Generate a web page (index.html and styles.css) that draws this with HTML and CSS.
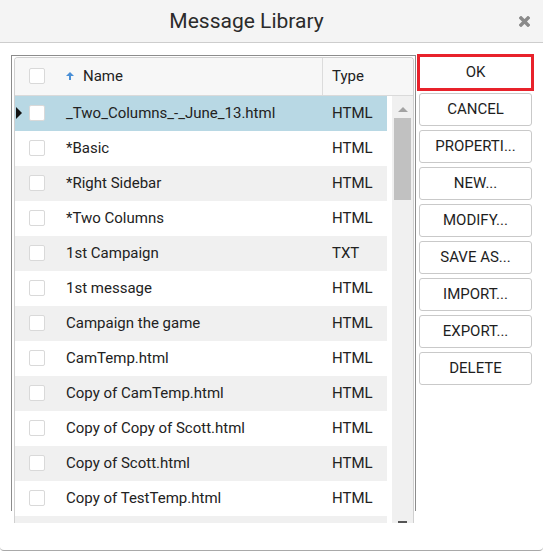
FILE: index.html
```html
<!DOCTYPE html>
<html lang="en">

<head>
    <meta charset="UTF-8">
    <meta name="viewport" content="width=device-width, initial-scale=1.0">
    <title>Message Library</title>
    <link rel="stylesheet" href="styles.css">
</head>

<body>

    <div class="dialog">
        <div class="titlebar">
            <h1 class="title">Message Library</h1>
            <button class="close" title="Close">
                <svg width="11" height="11" viewBox="0 0 11 11">
                    <path d="M2 2 L9 9 M9 2 L2 9" stroke="#8a8a8a" stroke-width="3.4" stroke-linecap="square" fill="none"/>
                </svg>
            </button>
        </div>

        <div class="content">
            <div class="grid-frame">
                <div class="grid">
                    <div class="grid-head">
                        <div class="cell cell-check"><span class="checkbox"></span></div>
                        <div class="cell cell-name">
                            <svg class="sort-arrow" width="8" height="8" viewBox="0 0 8 8">
                                <path d="M4 0 L8 4 H5 V8 H3 V4 H0 Z" fill="#4a8fd6"/>
                            </svg>
                            Name
                        </div>
                        <div class="cell cell-type">Type</div>
                    </div>

                    <div class="grid-body">
                        <div class="rows">
                            <div class="row selected">
                                <div class="cell cell-check"><span class="pointer"></span><span class="checkbox"></span></div>
                                <div class="cell cell-name">_Two_Columns_-_June_13.html</div>
                                <div class="cell cell-type">HTML</div>
                            </div>
                            <div class="row">
                                <div class="cell cell-check"><span class="checkbox"></span></div>
                                <div class="cell cell-name">*Basic</div>
                                <div class="cell cell-type">HTML</div>
                            </div>
                            <div class="row alt">
                                <div class="cell cell-check"><span class="checkbox"></span></div>
                                <div class="cell cell-name">*Right Sidebar</div>
                                <div class="cell cell-type">HTML</div>
                            </div>
                            <div class="row">
                                <div class="cell cell-check"><span class="checkbox"></span></div>
                                <div class="cell cell-name">*Two Columns</div>
                                <div class="cell cell-type">HTML</div>
                            </div>
                            <div class="row alt">
                                <div class="cell cell-check"><span class="checkbox"></span></div>
                                <div class="cell cell-name">1st Campaign</div>
                                <div class="cell cell-type">TXT</div>
                            </div>
                            <div class="row">
                                <div class="cell cell-check"><span class="checkbox"></span></div>
                                <div class="cell cell-name">1st message</div>
                                <div class="cell cell-type">HTML</div>
                            </div>
                            <div class="row alt">
                                <div class="cell cell-check"><span class="checkbox"></span></div>
                                <div class="cell cell-name">Campaign the game</div>
                                <div class="cell cell-type">HTML</div>
                            </div>
                            <div class="row">
                                <div class="cell cell-check"><span class="checkbox"></span></div>
                                <div class="cell cell-name">CamTemp.html</div>
                                <div class="cell cell-type">HTML</div>
                            </div>
                            <div class="row alt">
                                <div class="cell cell-check"><span class="checkbox"></span></div>
                                <div class="cell cell-name">Copy of CamTemp.html</div>
                                <div class="cell cell-type">HTML</div>
                            </div>
                            <div class="row">
                                <div class="cell cell-check"><span class="checkbox"></span></div>
                                <div class="cell cell-name">Copy of Copy of Scott.html</div>
                                <div class="cell cell-type">HTML</div>
                            </div>
                            <div class="row alt">
                                <div class="cell cell-check"><span class="checkbox"></span></div>
                                <div class="cell cell-name">Copy of Scott.html</div>
                                <div class="cell cell-type">HTML</div>
                            </div>
                            <div class="row">
                                <div class="cell cell-check"><span class="checkbox"></span></div>
                                <div class="cell cell-name">Copy of TestTemp.html</div>
                                <div class="cell cell-type">HTML</div>
                            </div>
                            <div class="row alt"></div>
                        </div>

                        <div class="scrollbar">
                            <span class="scroll-up"></span>
                            <span class="scroll-thumb"></span>
                            <span class="scroll-down"></span>
                        </div>
                    </div>
                </div>
            </div>

            <div class="actions">
                <button class="btn btn-primary">OK</button>
                <button class="btn">Cancel</button>
                <button class="btn">Properti...</button>
                <button class="btn">New...</button>
                <button class="btn">Modify...</button>
                <button class="btn">Save As...</button>
                <button class="btn">Import...</button>
                <button class="btn">Export...</button>
                <button class="btn">Delete</button>
            </div>
        </div>
    </div>

</body>

</html>
```

FILE: styles.css
```css
body {
    font-family: Roboto, 'Liberation Sans', Arial, sans-serif;
    background-color: #fff;
    margin: 0;
    padding: 0;
    color: #222;
}

.dialog {
    height: 551px;
    box-sizing: border-box;
    border-bottom: 1px solid #a9a9a9;
    border-radius: 0 0 4px 4px;
    overflow: hidden;
}

/* Başlık çubuğu */
.titlebar {
    display: flex;
    align-items: center;
    height: 42px;
    background-color: #f4f4f4;
    border-bottom: 1px solid #cdcdcd;
}

.title {
    flex: 1;
    margin: 0;
    text-align: center;
    font-size: 21px;
    font-weight: 400;
    line-height: 40px;
    color: #2b2b2b;
}

.close {
    width: 38px;
    height: 42px;
    margin-left: 12px;
    padding: 0;
    border: none;
    background: none;
    display: flex;
    align-items: center;
    justify-content: center;
    cursor: pointer;
}

.content {
    display: flex;
    align-items: flex-start;
    padding: 12px 0 0 11px;
}

/* Liste */
.grid-frame {
    width: 405px;
    height: 456px;
    box-sizing: border-box;
    padding: 1px 1px 0 2px;
    border: 1px solid #8c8c8c;
    border-bottom: none;
}

.grid {
    height: 466px;
    box-sizing: border-box;
    border: 1px solid #d0d0d0;
    border-bottom: none;
    border-radius: 4px 4px 0 0;
    overflow: hidden;
    background-color: #fff;
}

.grid-head {
    display: flex;
    height: 38px;
    box-sizing: border-box;
    background-color: #f7f7f7;
    border-bottom: 1px solid #dadada;
}

.cell {
    display: flex;
    align-items: center;
    font-size: 15px;
    white-space: nowrap;
    padding-bottom: 1px;
}

.cell-check {
    position: relative;
    width: 37px;
    flex-shrink: 0;
    padding-left: 14px;
    box-sizing: border-box;
}

.cell-name {
    width: 270px;
    flex-shrink: 0;
    padding-left: 14px;
    box-sizing: border-box;
    overflow: hidden;
}

.cell-type {
    flex: 1;
    padding-left: 10px;
}

.grid-head .cell-type {
    border-left: 1px solid #dcdcdc;
    padding-left: 9px;
}

.sort-arrow {
    margin-right: 9px;
}

.checkbox {
    width: 16px;
    height: 16px;
    box-sizing: border-box;
    background-color: #fff;
    border: 1px solid #d9d9d9;
    border-radius: 2px;
}

.grid-body {
    display: flex;
    height: 427px;
    overflow: hidden;
}

.rows {
    width: 372px;
    margin-right: 5px;
}

.row {
    display: flex;
    height: 35px;
}

.row.alt {
    background-color: #f0f0f0;
}

.row.selected {
    background-color: #b8d8e4;
}

.pointer {
    position: absolute;
    left: 1px;
    top: 11px;
    width: 0;
    height: 0;
    border-top: 6px solid transparent;
    border-bottom: 6px solid transparent;
    border-left: 6px solid #111;
}

/* Kaydırma çubuğu */
.scrollbar {
    width: 21px;
    display: flex;
    flex-direction: column;
    align-items: center;
    background-color: #f0f0f0;
}

.scroll-up {
    margin-top: 11px;
    width: 0;
    height: 0;
    border-left: 5px solid transparent;
    border-right: 5px solid transparent;
    border-bottom: 5px solid #a3a3a3;
}

.scroll-thumb {
    margin-top: 6px;
    width: 17px;
    height: 82px;
    background-color: #c1c1c1;
}

.scroll-down {
    margin-top: auto;
    width: 9px;
    height: 2px;
    background-color: #555;
}

/* Butonlar */
.actions {
    display: flex;
    flex-direction: column;
    margin: 1px 0 0 3px;
}

.btn {
    width: 113px;
    height: 33px;
    margin-bottom: 4px;
    padding: 0 0 1px;
    background-color: #fff;
    border: 1px solid #c9c9c9;
    border-radius: 3px;
    font-family: Roboto, 'Liberation Sans', Arial, sans-serif;
    font-size: 15px;
    color: #1e1e1e;
    text-transform: uppercase;
    cursor: pointer;
}

.btn-primary {
    border-color: #e8222b;
    border-radius: 0;
    box-shadow: 0 0 0 2px #e8222b;
}
```
